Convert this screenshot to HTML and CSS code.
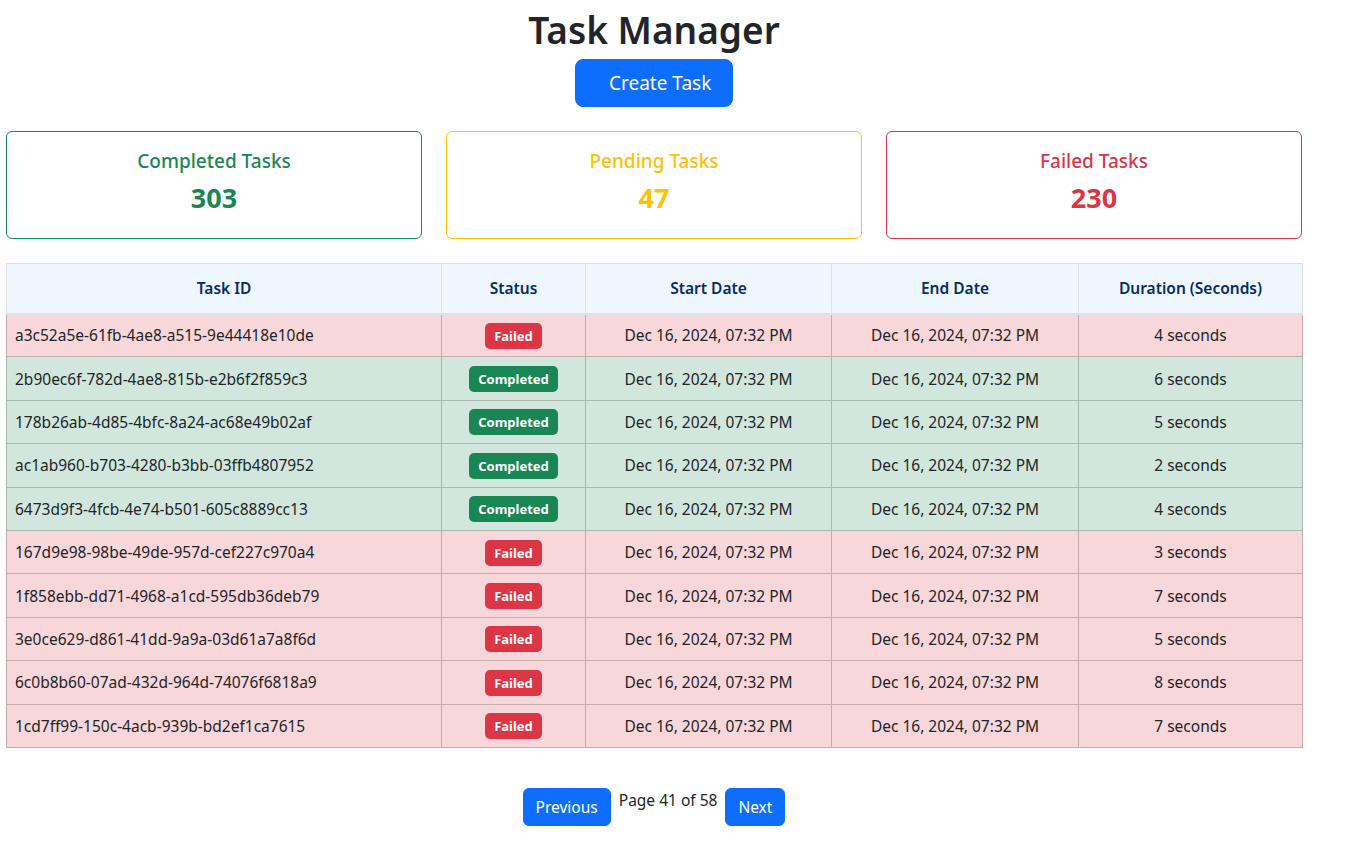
FILE: index.html
```html
<!DOCTYPE html>
<html lang="en">
<head>
<meta charset="utf-8">
<title>Task Manager</title>
<link rel="stylesheet" href="styles.css">
</head>
<body>
<div class="page">
  <h1 class="title">Task Manager</h1>
  <div class="create-wrap"><button class="btn btn-lg">Create Task</button></div>

  <div class="cards">
    <div class="card card-success">
      <h5 class="card-title">Completed Tasks</h5>
      <h3 class="card-num">303</h3>
    </div>
    <div class="card card-warning">
      <h5 class="card-title">Pending Tasks</h5>
      <h3 class="card-num">47</h3>
    </div>
    <div class="card card-danger">
      <h5 class="card-title">Failed Tasks</h5>
      <h3 class="card-num">230</h3>
    </div>
  </div>

  <table class="tasks">
    <colgroup>
      <col class="c1"><col class="c2"><col class="c3"><col class="c4"><col class="c5">
    </colgroup>
    <thead>
      <tr><th>Task ID</th><th>Status</th><th>Start Date</th><th>End Date</th><th>Duration (Seconds)</th></tr>
    </thead>
    <tbody>
      <tr class="danger"><td class="id">a3c52a5e-61fb-4ae8-a515-9e44418e10de</td><td><span class="badge bg-danger">Failed</span></td><td>Dec 16, 2024, 07:32 PM</td><td>Dec 16, 2024, 07:32 PM</td><td>4 seconds</td></tr>
      <tr class="success"><td class="id">2b90ec6f-782d-4ae8-815b-e2b6f2f859c3</td><td><span class="badge bg-success">Completed</span></td><td>Dec 16, 2024, 07:32 PM</td><td>Dec 16, 2024, 07:32 PM</td><td>6 seconds</td></tr>
      <tr class="success"><td class="id">178b26ab-4d85-4bfc-8a24-ac68e49b02af</td><td><span class="badge bg-success">Completed</span></td><td>Dec 16, 2024, 07:32 PM</td><td>Dec 16, 2024, 07:32 PM</td><td>5 seconds</td></tr>
      <tr class="success"><td class="id">ac1ab960-b703-4280-b3bb-03ffb4807952</td><td><span class="badge bg-success">Completed</span></td><td>Dec 16, 2024, 07:32 PM</td><td>Dec 16, 2024, 07:32 PM</td><td>2 seconds</td></tr>
      <tr class="success"><td class="id">6473d9f3-4fcb-4e74-b501-605c8889cc13</td><td><span class="badge bg-success">Completed</span></td><td>Dec 16, 2024, 07:32 PM</td><td>Dec 16, 2024, 07:32 PM</td><td>4 seconds</td></tr>
      <tr class="danger"><td class="id">167d9e98-98be-49de-957d-cef227c970a4</td><td><span class="badge bg-danger">Failed</span></td><td>Dec 16, 2024, 07:32 PM</td><td>Dec 16, 2024, 07:32 PM</td><td>3 seconds</td></tr>
      <tr class="danger"><td class="id">1f858ebb-dd71-4968-a1cd-595db36deb79</td><td><span class="badge bg-danger">Failed</span></td><td>Dec 16, 2024, 07:32 PM</td><td>Dec 16, 2024, 07:32 PM</td><td>7 seconds</td></tr>
      <tr class="danger"><td class="id">3e0ce629-d861-41dd-9a9a-03d61a7a8f6d</td><td><span class="badge bg-danger">Failed</span></td><td>Dec 16, 2024, 07:32 PM</td><td>Dec 16, 2024, 07:32 PM</td><td>5 seconds</td></tr>
      <tr class="danger"><td class="id">6c0b8b60-07ad-432d-964d-74076f6818a9</td><td><span class="badge bg-danger">Failed</span></td><td>Dec 16, 2024, 07:32 PM</td><td>Dec 16, 2024, 07:32 PM</td><td>8 seconds</td></tr>
      <tr class="danger"><td class="id">1cd7ff99-150c-4acb-939b-bd2ef1ca7615</td><td><span class="badge bg-danger">Failed</span></td><td>Dec 16, 2024, 07:32 PM</td><td>Dec 16, 2024, 07:32 PM</td><td>7 seconds</td></tr>
    </tbody>
  </table>

  <div class="pager">
    <button class="btn">Previous</button>
    <span class="page-info">Page 41 of 58</span>
    <button class="btn">Next</button>
  </div>
</div>
</body>
</html>
```

FILE: styles.css
```css
* { box-sizing: border-box; }
html, body { margin: 0; padding: 0; background: #fff; }
body {
  font-family: "Noto Sans", "Open Sans", sans-serif;
  font-size: 15.5px;
  line-height: 24px;
  color: #212529;
}
.page {
  width: 1296px;
  margin-left: 6px;
  padding-top: 6px;
}
.title {
  margin: 0 0 5px 0;
  text-align: center;
  font-size: 37px;
  line-height: 48px;
  font-weight: 600;
  color: #212529;
}
.create-wrap { display: flex; justify-content: center; }
.btn {
  font-family: inherit;
  background: #0d6efd;
  color: #fff;
  border: 1px solid #0d6efd;
  border-radius: 6px;
  font-size: 15.5px;
  line-height: 24px;
  padding: 6px 12px;
  white-space: nowrap;
  cursor: pointer;
}
.btn-lg {
  width: 158px;
  height: 48px;
  font-size: 19px;
  line-height: 30px;
  padding: 8px 22px 8px 33px;
  border-radius: 8px;
}
.cards {
  display: flex;
  gap: 24px;
  margin-top: 24px;
}
.card {
  flex: 1;
  height: 108px;
  border: 1px solid;
  border-radius: 6px;
  padding: 17px 16px 16px;
  text-align: center;
}
.card-title {
  margin: 0 0 8px 0;
  font-size: 19px;
  line-height: 24px;
  font-weight: 500;
}
.card-num {
  margin: 0;
  font-size: 27px;
  line-height: 34px;
  font-weight: 700;
}
.card-success { border-color: #198754; color: #198754; }
.card-warning { border-color: #ffc107; color: #ffc107; }
.card-danger { border-color: #dc3545; color: #dc3545; }

.tasks {
  width: 1296px;
  margin-top: 24px;
  border-collapse: collapse;
  table-layout: fixed;
}
.c1 { width: 435px; }
.c2 { width: 144px; }
.c3 { width: 246px; }
.c4 { width: 247px; }
.c5 { width: 224px; }
.tasks th {
  height: 50px;
  background: #eef6ff;
  color: #052c65;
  font-weight: 600;
  border: 1px solid #dee2e6;
  border-bottom: 2px solid #dee2e6;
  text-align: center;
  padding: 8px;
}
.tasks td {
  height: 43.4px;
  padding: 0 8px;
  text-align: center;
  vertical-align: middle;
  border: 1px solid;
}
.tasks td.id { text-align: left; }
.tasks tr.danger td { background: #f8d7da; border-color: #c6acae; }
.tasks tr.success td { background: #d1e7dd; border-color: #a7b9b1; }
.badge {
  display: inline-block;
  font-size: 13px;
  line-height: 16px;
  font-weight: 700;
  color: #fff;
  padding: 5px 9px;
  border-radius: 5px;
  vertical-align: middle;
}
.bg-danger { background: #dc3545; }
.bg-success { background: #198754; }
.pager {
  display: flex;
  justify-content: center;
  align-items: flex-start;
  gap: 8px;
  margin-top: 40px;
}
.page-info { line-height: 24px; }
```
